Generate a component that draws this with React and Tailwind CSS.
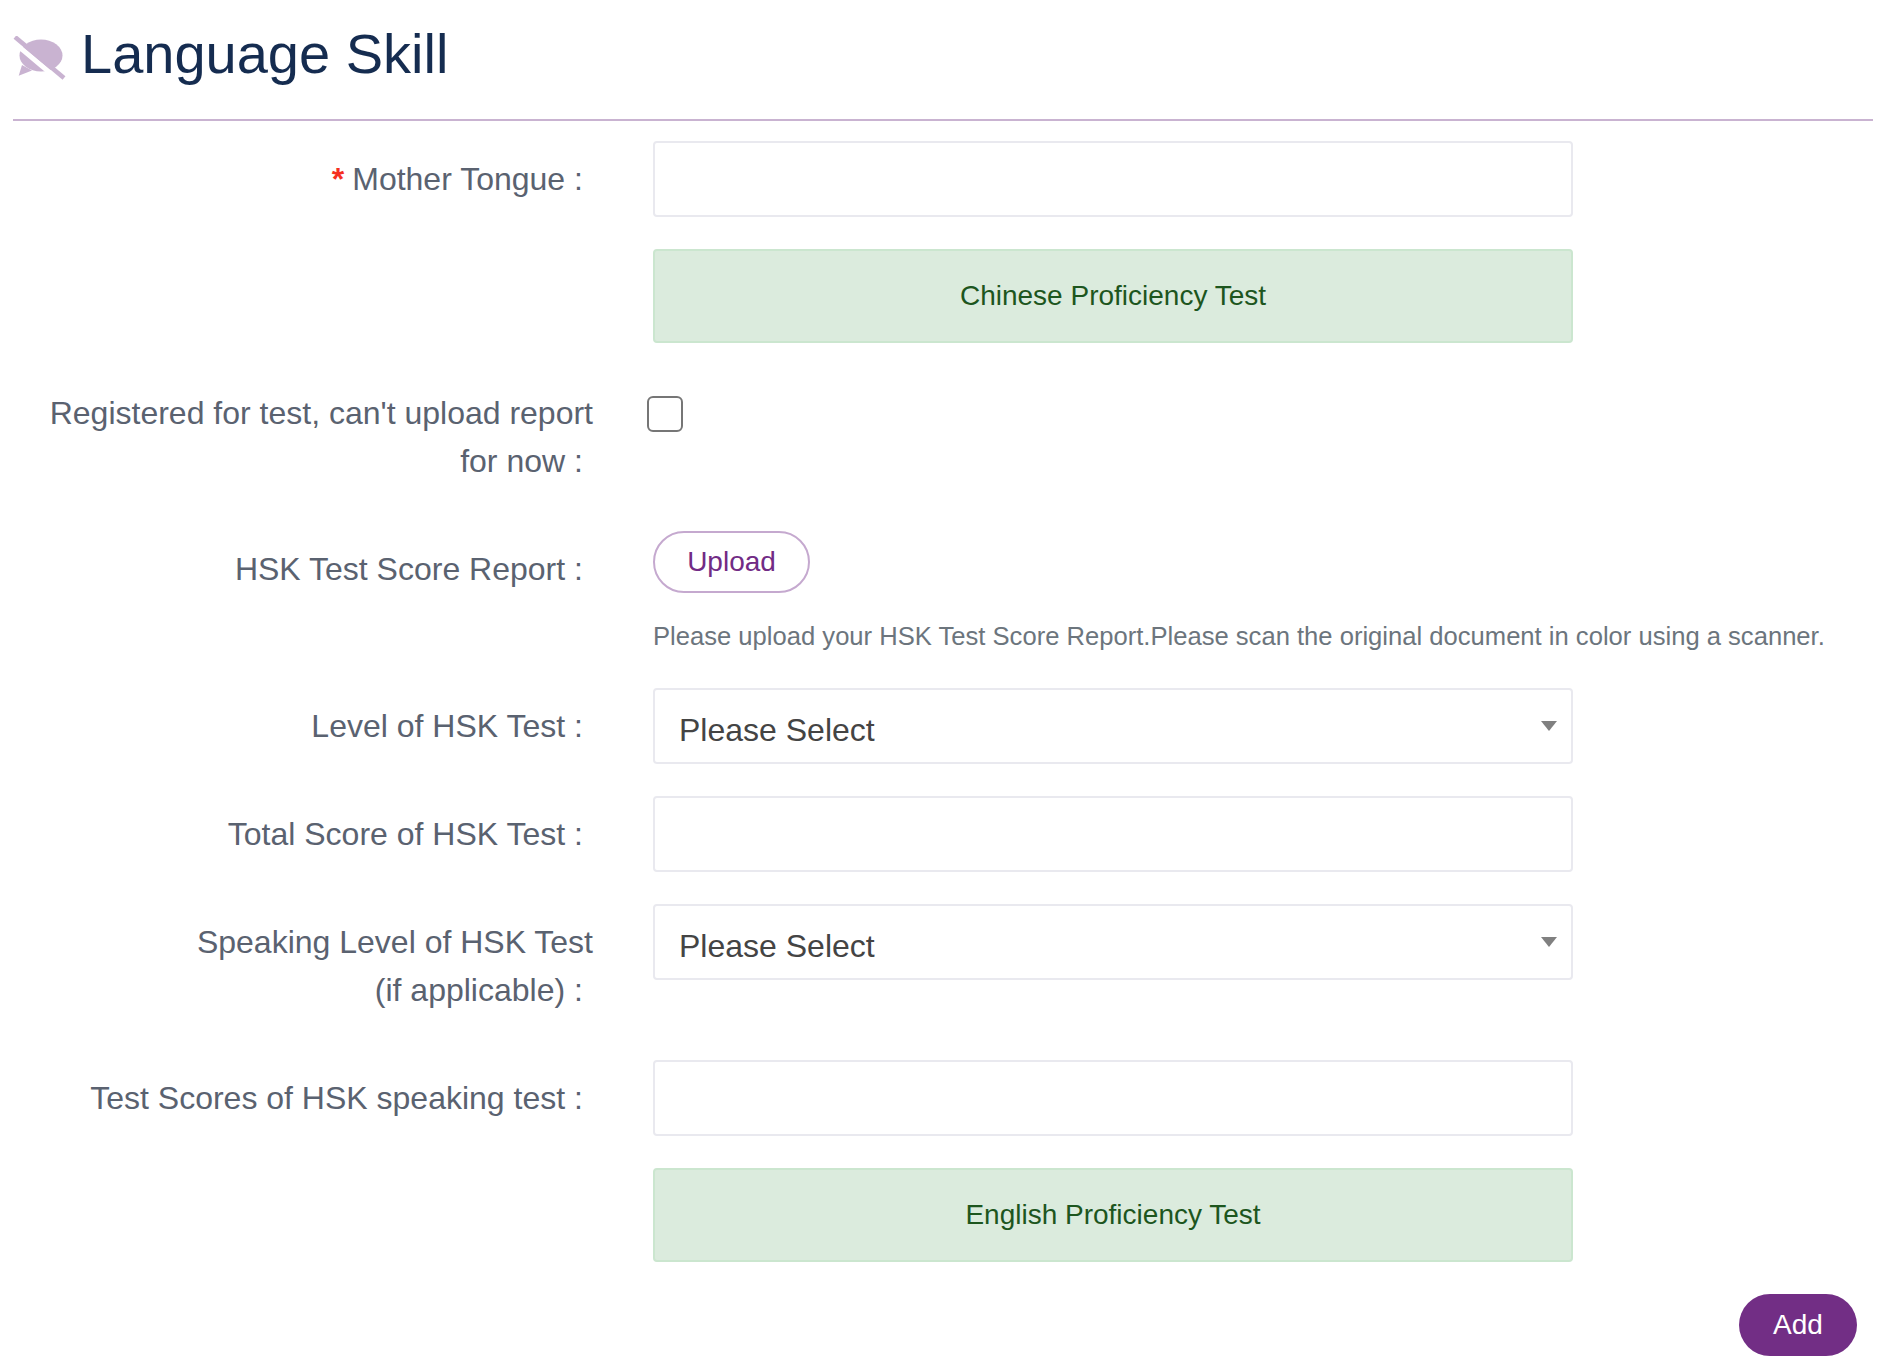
import React from 'react';

function Label({ children, required, className = '' }) {
  return (
    <label className={`w-[580px] shrink-0 text-right text-[32px] leading-[48px] text-[#5a6270] ${className}`}>
      {required && <span className="mr-2 font-bold text-[#f5301f]">*</span>}
      {children}
      <span className="ml-[9px] mr-[10px]">:</span>
    </label>
  );
}

function TextBox() {
  return <input type="text" className="block h-[76px] w-[920px] rounded border-2 border-[#e9e9ef] bg-white" />;
}

function SelectBox() {
  return (
    <div className="flex h-[76px] w-[920px] items-center justify-between rounded border-2 border-[#e9e9ef] bg-white pl-6 pr-[13px]">
      <span className="mt-[7px] text-[32px] text-[#444444]">Please Select</span>
      <svg width="18" height="12" viewBox="0 0 18 12">
        <path d="M1 1h16L9 11z" fill="#808080" />
      </svg>
    </div>
  );
}

function Banner({ children }) {
  return (
    <div className="flex h-[94px] w-[920px] items-center justify-center rounded border-2 border-[#cbe6cf] bg-[#dbebdd] text-[28px] text-[#1d561e]">
      {children}
    </div>
  );
}

function Row({ label, required, children, className = '', labelClass = '' }) {
  return (
    <div className={`flex gap-[60px] ${className}`}>
      <Label required={required} className={labelClass}>{label}</Label>
      <div className="min-w-0 flex-1">{children}</div>
    </div>
  );
}

export default function App() {
  return (
    <div className="min-h-screen bg-white pl-[13px] pr-[17px] font-['Liberation_Sans',Arial,sans-serif]">
      <div className="flex h-[121px] items-start border-b-2 border-[#c9b3d1] pt-[18px]">
        <svg width="54" height="44" viewBox="0 0 54 44" className="mt-[18px] shrink-0">
          <ellipse cx="28" cy="19.500" rx="21.500" ry="16" fill="#c9b3d1" />
          <path d="M9 29L5.700 39.800 19 34.500z" fill="#c9b3d1" />
          <path d="M-1 5l49 41" stroke="#ffffff" strokeWidth="5" />
          <path d="M2 1l49 41" stroke="#c9b3d1" strokeWidth="4.500" />
        </svg>
        <h1 className="ml-[14px] text-[56px] leading-[72px] text-[#152c50]">Language Skill</h1>
      </div>

      <Row required label="Mother Tongue" className="mt-5" labelClass="pt-[14px]">
        <TextBox />
      </Row>

      <div className="mt-8 ml-[640px]">
        <Banner>Chinese Proficiency Test</Banner>
      </div>

      <Row label="Registered for test, can't upload report for now" className="mt-[46px]">
        <input type="checkbox" className="mt-[7px] -ml-[6px] block h-9 w-9 appearance-none rounded-[6px] border-2 border-[#767676] bg-white" />
      </Row>

      <Row label="HSK Test Score Report" className="mt-[46px]" labelClass="pt-[14px]">
        <button className="h-[62px] w-[157px] rounded-full border-2 border-[#c5a9cf] bg-white text-[28px] text-[#722b85]">Upload</button>
        <p className="mt-[25px] whitespace-nowrap text-[25.6px] leading-[36px] text-[#6c757d]">
          Please upload your HSK Test Score Report.Please scan the original document in color using a scanner.
        </p>
      </Row>

      <Row label="Level of HSK Test" className="mt-[34px]" labelClass="pt-[14px]">
        <SelectBox />
      </Row>

      <Row label="Total Score of HSK Test" className="mt-8" labelClass="pt-[14px]">
        <TextBox />
      </Row>

      <Row
        label={<>Speaking Level of HSK Test<br />(if applicable)</>}
        className="mt-8"
        labelClass="pt-[14px]"
      >
        <SelectBox />
      </Row>

      <Row label="Test Scores of HSK speaking test" className="mt-[46px]" labelClass="pt-[14px]">
        <TextBox />
      </Row>

      <div className="mt-8 ml-[640px]">
        <Banner>English Proficiency Test</Banner>
      </div>

      <div className="mt-8 flex justify-end pr-4">
        <button className="h-[62px] w-[118px] rounded-full bg-[#722e85] text-[28px] text-white">Add</button>
      </div>
    </div>
  );
}
